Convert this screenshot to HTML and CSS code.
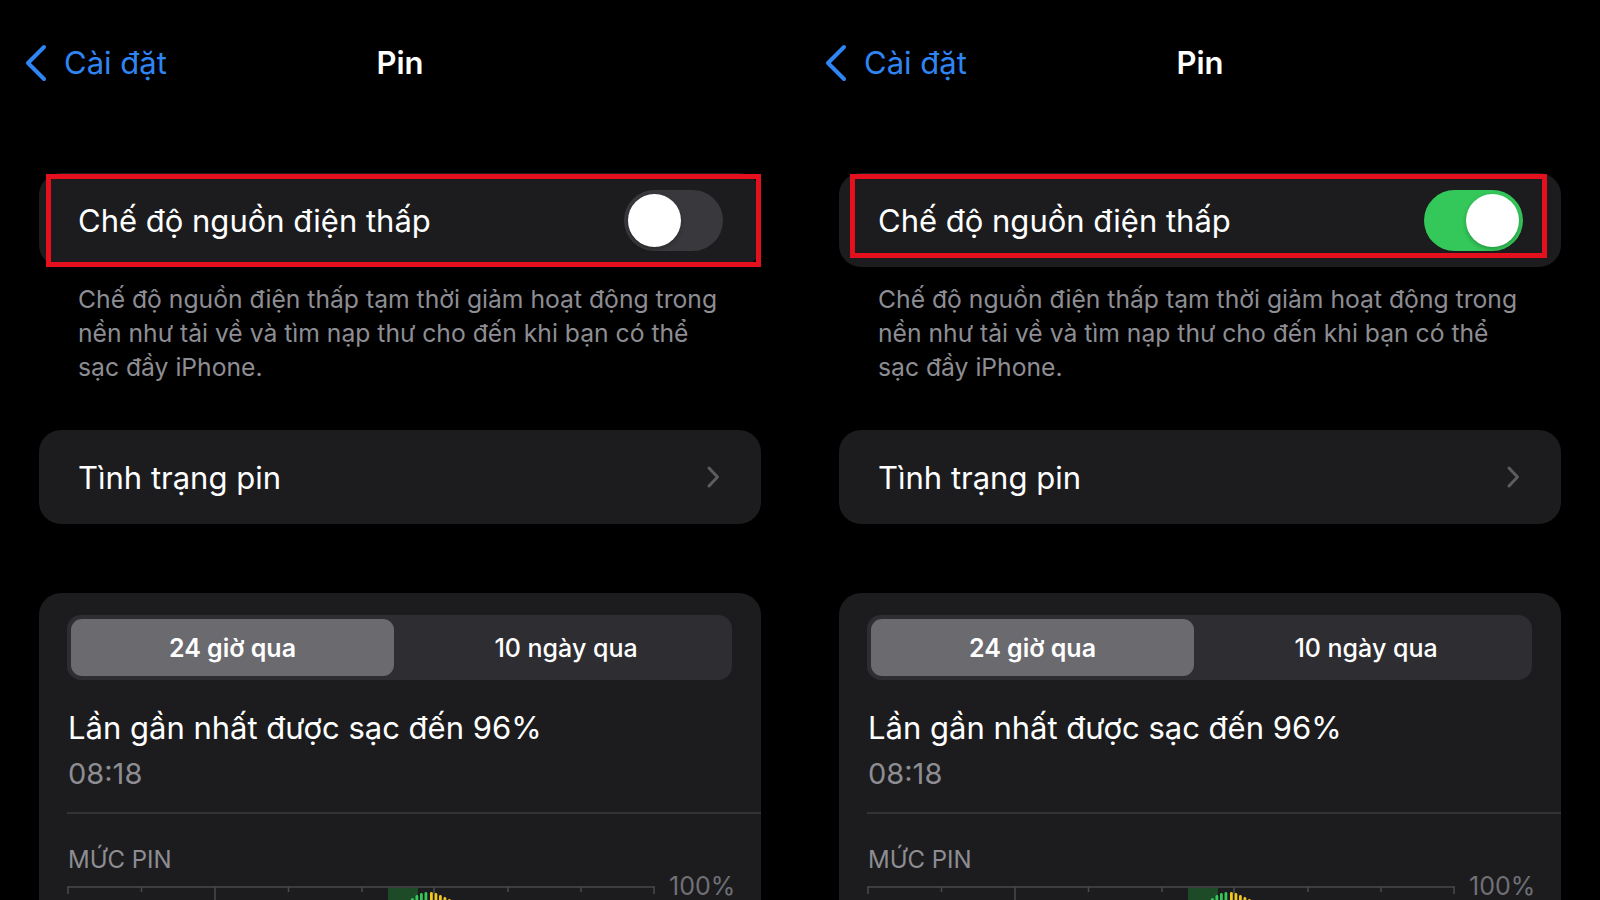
FILE: index.html
```html
<!DOCTYPE html>
<html lang="vi">
<head>
<meta charset="utf-8">
<title>Pin</title>
<link rel="stylesheet" href="styles.css">
</head>
<body>
<div class="screens">
  <section class="phone">
    <header class="nav">
      <a class="back">
        <svg class="back-chev" width="24" height="38" viewBox="0 0 24 38"><path d="M20 3 L4 19 L20 35" fill="none" stroke="currentColor" stroke-width="4" stroke-linecap="round" stroke-linejoin="round"/></svg>
        <span>Cài đặt</span>
      </a>
      <h1 class="title">Pin</h1>
      <span></span>
    </header>

    <div class="card row highlight">
      <span class="label">Chế độ nguồn điện thấp</span>
      <span class="switch"><span class="knob"></span></span>
    </div>
    <p class="footnote">Chế độ nguồn điện thấp tạm thời giảm hoạt động trong<br>nền như tải về và tìm nạp thư cho đến khi bạn có thể<br>sạc đầy iPhone.</p>

    <div class="card row link">
      <span class="label">Tình trạng pin</span>
      <svg class="chev" width="16" height="24" viewBox="0 0 16 24"><path d="M4 3 L12.5 12 L4 21" fill="none" stroke="currentColor" stroke-width="3" stroke-linecap="round" stroke-linejoin="round"/></svg>
    </div>

    <div class="card usage">
      <div class="segmented">
        <span class="seg active">24 giờ qua</span>
        <span class="seg">10 ngày qua</span>
      </div>
      <div class="charged">Lần gần nhất được sạc đến 96%</div>
      <div class="time">08:18</div>
      <div class="divider"></div>
      <div class="caption">MỨC PIN</div>
      <div class="chart">
        <svg class="chart-svg" width="590" height="40" viewBox="0 0 590 40">
          <rect x="321" y="1" width="30" height="39" fill="#1d4a27"/>
          <line x1="0" y1="1" x2="588" y2="1" stroke="#3d3d40" stroke-width="2"/>
          <g stroke="#4a4a4e" stroke-width="1.5">
            <line x1="1" y1="1" x2="1" y2="8"/>
            <line x1="74.5" y1="1" x2="74.5" y2="6"/>
            <line x1="148" y1="1" x2="148" y2="40"/>
            <line x1="221.5" y1="1" x2="221.5" y2="6"/>
            <line x1="295" y1="1" x2="295" y2="6"/>
            <line x1="367" y1="1" x2="367" y2="8"/>
            <line x1="441" y1="1" x2="441" y2="6"/>
            <line x1="514" y1="1" x2="514" y2="6"/>
            <line x1="587" y1="1" x2="587" y2="8"/>
          </g>
          <g fill="#34c759">
            <rect x="344" y="12" width="2.8" height="30" rx="1.4"/>
            <rect x="348.5" y="9" width="2.8" height="30" rx="1.4"/>
            <rect x="353" y="7" width="2.8" height="30" rx="1.4"/>
            <rect x="357.5" y="6" width="2.8" height="30" rx="1.4"/>
          </g>
          <g fill="#f2c81c">
            <rect x="363" y="6" width="2.8" height="30" rx="1.4"/>
            <rect x="367.5" y="7" width="2.8" height="30" rx="1.4"/>
            <rect x="372" y="9" width="2.8" height="30" rx="1.4"/>
            <rect x="376.5" y="11" width="2.8" height="30" rx="1.4"/>
            <rect x="381" y="13" width="2.8" height="30" rx="1.4"/>
          </g>
        </svg>
        <span class="pct">100%</span>
      </div>
    </div>
  </section>

  <section class="phone">
    <header class="nav">
      <a class="back">
        <svg class="back-chev" width="24" height="38" viewBox="0 0 24 38"><path d="M20 3 L4 19 L20 35" fill="none" stroke="currentColor" stroke-width="4" stroke-linecap="round" stroke-linejoin="round"/></svg>
        <span>Cài đặt</span>
      </a>
      <h1 class="title">Pin</h1>
      <span></span>
    </header>

    <div class="card row highlight alt">
      <span class="label">Chế độ nguồn điện thấp</span>
      <span class="switch on"><span class="knob"></span></span>
    </div>
    <p class="footnote">Chế độ nguồn điện thấp tạm thời giảm hoạt động trong<br>nền như tải về và tìm nạp thư cho đến khi bạn có thể<br>sạc đầy iPhone.</p>

    <div class="card row link">
      <span class="label">Tình trạng pin</span>
      <svg class="chev" width="16" height="24" viewBox="0 0 16 24"><path d="M4 3 L12.5 12 L4 21" fill="none" stroke="currentColor" stroke-width="3" stroke-linecap="round" stroke-linejoin="round"/></svg>
    </div>

    <div class="card usage">
      <div class="segmented">
        <span class="seg active">24 giờ qua</span>
        <span class="seg">10 ngày qua</span>
      </div>
      <div class="charged">Lần gần nhất được sạc đến 96%</div>
      <div class="time">08:18</div>
      <div class="divider"></div>
      <div class="caption">MỨC PIN</div>
      <div class="chart">
        <svg class="chart-svg" width="590" height="40" viewBox="0 0 590 40">
          <rect x="321" y="1" width="30" height="39" fill="#1d4a27"/>
          <line x1="0" y1="1" x2="588" y2="1" stroke="#3d3d40" stroke-width="2"/>
          <g stroke="#4a4a4e" stroke-width="1.5">
            <line x1="1" y1="1" x2="1" y2="8"/>
            <line x1="74.5" y1="1" x2="74.5" y2="6"/>
            <line x1="148" y1="1" x2="148" y2="40"/>
            <line x1="221.5" y1="1" x2="221.5" y2="6"/>
            <line x1="295" y1="1" x2="295" y2="6"/>
            <line x1="367" y1="1" x2="367" y2="8"/>
            <line x1="441" y1="1" x2="441" y2="6"/>
            <line x1="514" y1="1" x2="514" y2="6"/>
            <line x1="587" y1="1" x2="587" y2="8"/>
          </g>
          <g fill="#34c759">
            <rect x="344" y="12" width="2.8" height="30" rx="1.4"/>
            <rect x="348.5" y="9" width="2.8" height="30" rx="1.4"/>
            <rect x="353" y="7" width="2.8" height="30" rx="1.4"/>
            <rect x="357.5" y="6" width="2.8" height="30" rx="1.4"/>
          </g>
          <g fill="#f2c81c">
            <rect x="363" y="6" width="2.8" height="30" rx="1.4"/>
            <rect x="367.5" y="7" width="2.8" height="30" rx="1.4"/>
            <rect x="372" y="9" width="2.8" height="30" rx="1.4"/>
            <rect x="376.5" y="11" width="2.8" height="30" rx="1.4"/>
            <rect x="381" y="13" width="2.8" height="30" rx="1.4"/>
          </g>
        </svg>
        <span class="pct">100%</span>
      </div>
    </div>
  </section>
</div>
</body>
</html>
```

FILE: styles.css
```css
* { box-sizing: border-box; }

html, body {
  margin: 0;
  padding: 0;
  background: #000;
}

body {
  font-family: Inter, "Noto Sans", "Liberation Sans", sans-serif;
  color: #fff;
  -webkit-font-smoothing: antialiased;
}

.screens {
  display: flex;
  width: 1600px;
  height: 900px;
  overflow: hidden;
}

.phone {
  width: 800px;
  height: 900px;
  flex: none;
  display: flex;
  flex-direction: column;
  overflow: hidden;
}

/* Navigation bar */
.nav {
  height: 126px;
  display: grid;
  grid-template-columns: 1fr auto 1fr;
  align-items: center;
  flex: none;
}

.back {
  display: flex;
  align-items: center;
  gap: 16px;
  padding-left: 24px;
  color: #2f85f4;
  font-size: 31px;
  line-height: 40px;
}

.back-chev { flex: none; }

.title {
  margin: 0;
  font-size: 31px;
  font-weight: 600;
  line-height: 40px;
  text-align: center;
}

/* Cards */
.card {
  background: #1c1c1e;
  border-radius: 22px;
  margin: 0 39px;
  flex: none;
}

.row {
  height: 94px;
  display: flex;
  align-items: center;
  justify-content: space-between;
  padding: 0 38px 0 39px;
  font-size: 31px;
}

.highlight {
  position: relative;
  margin-top: 47px;
}

.highlight::after {
  content: "";
  position: absolute;
  left: 7px;
  top: 1px;
  right: 0;
  bottom: 0;
  border: 5px solid #e5101d;
}

.highlight.alt::after {
  left: 11px;
  right: 14px;
  top: 1px;
  bottom: 9px;
}

.switch {
  width: 99px;
  height: 61px;
  border-radius: 31px;
  background: #39393d;
  padding: 4px;
  display: flex;
  justify-content: flex-start;
}

.switch.on {
  background: #34c759;
  justify-content: flex-end;
}

.knob {
  width: 53px;
  height: 53px;
  border-radius: 50%;
  background: #fff;
  box-shadow: 0 2px 4px rgba(0,0,0,0.25);
}

.footnote {
  margin: 15px 0 0;
  padding: 0 40px 0 78px;
  font-size: 24.7px;
  line-height: 34px;
  color: #8d8d93;
  white-space: nowrap;
}

.link {
  margin-top: 46px;
}

.chev {
  color: #5c5c61;
  margin-right: 2px;
}

/* Usage card */
.usage {
  margin-top: 69px;
  padding: 22px 0 0 28px;
  height: 340px;
}

.segmented {
  width: 665px;
  height: 65px;
  border-radius: 14px;
  background: #2e2e32;
  padding: 4px;
  display: flex;
}

.seg {
  flex: 1;
  display: flex;
  align-items: center;
  justify-content: center;
  font-size: 25px;
  font-weight: 500;
  border-radius: 11px;
  padding-left: 10px;
}

.seg.active {
  background: #6a6a6f;
  font-weight: 600;
  flex: 0 0 323px;
  padding-left: 0;
}

.charged {
  margin: 26px 0 0 1px;
  font-size: 31px;
  line-height: 44px;
}

.time {
  margin: 2px 0 0 1px;
  font-size: 29px;
  line-height: 44px;
  color: #8d8d93;
}

.divider {
  margin-top: 16px;
  height: 2px;
  background: #323235;
}

.caption {
  margin: 31px 0 0 1px;
  font-size: 24px;
  line-height: 30px;
  color: #8d8d93;
}

.chart {
  margin-top: 11px;
  display: flex;
  align-items: flex-start;
  gap: 12px;
}

.chart-svg { flex: none; }

.pct {
  margin-top: -15px;
  font-size: 25px;
  line-height: 30px;
  color: #707075;
}
```
